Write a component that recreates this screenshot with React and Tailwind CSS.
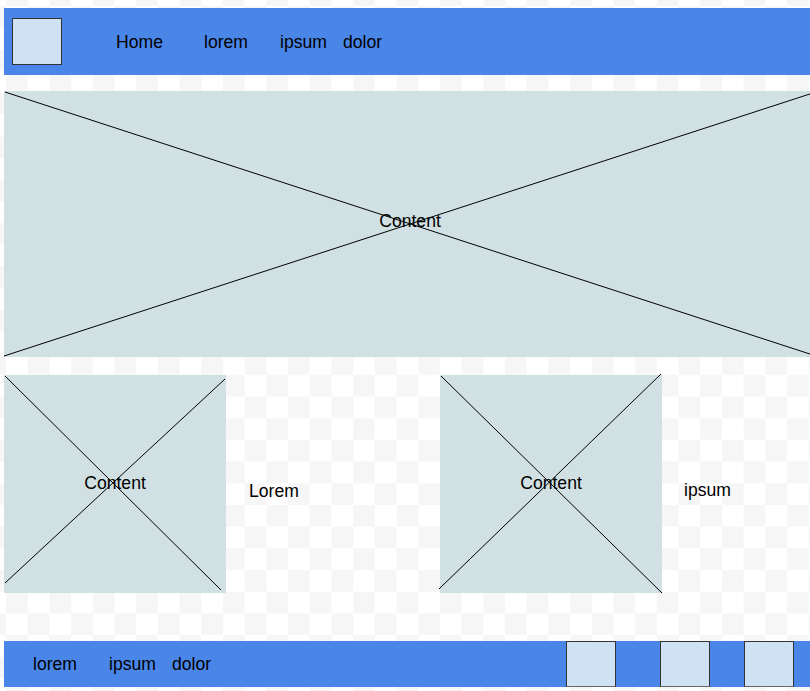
import React from "react";

const navItems = [
  { label: "Home", w: "w-[88px]" },
  { label: "lorem", w: "w-[76px]" },
  { label: "ipsum", w: "w-[63px]" },
  { label: "dolor", w: "w-[60px]" },
];

const footerItems = [
  { label: "lorem", w: "w-[76px]" },
  { label: "ipsum", w: "w-[63px]" },
  { label: "dolor", w: "w-[60px]" },
];

// placeholder box with a cross drawn over it
const Placeholder = ({ className, w, h, lines }) => (
  <div className={`relative bg-[#d0e0e3] flex items-center justify-center ${className}`}>
    <svg
      className="absolute inset-0 overflow-visible"
      width={w}
      height={h}
      viewBox={`0 0 ${w} ${h}`}
    >
      {lines.map((l, i) => (
        <line key={i} x1={l[0]} y1={l[1]} x2={l[2]} y2={l[3]} stroke="#000" strokeWidth="1" />
      ))}
    </svg>
    <span className="relative">Content</span>
  </div>
);

const App = () => {
  return (
    <div
      className="min-h-screen w-full overflow-hidden bg-[repeating-conic-gradient(#f6f6f6_0_25%,#ffffff_0_50%)] bg-[length:43.4px_43.4px] bg-[position:6px_6px] text-black text-[17.6px] leading-none"
      style={{ fontFamily: '"Liberation Sans", Arial, sans-serif' }}
    >
      <div className="w-[812px] ml-1 pt-2">
        {/* Header */}
        <div className="h-[67px] bg-[#4a86e8] flex items-center pl-2 pb-[1px]">
          <div className="w-[50px] h-[47px] bg-[#cfe2f3] border border-[#333]" />
          <nav className="flex items-center ml-[54px] pt-[4px]">
            {navItems.map((n) => (
              <span key={n.label} className={n.w}>
                {n.label}
              </span>
            ))}
          </nav>
        </div>

        {/* Hero */}
        <Placeholder
          className="mt-4 h-[266px] w-[812px] pb-1"
          w={812}
          h={266}
          lines={[
            [1, 1, 812, 265],
            [0, 265, 812, 1],
          ]}
        />

        {/* Row */}
        <div className="mt-[18px] flex items-center">
          <Placeholder
            className="w-[222px] h-[218px]"
            w={222}
            h={218}
            lines={[
              [1, 1, 217, 215],
              [221, 4, 1, 208],
            ]}
          />
          <div className="w-[214px] pl-[23px] pt-[16px]">Lorem</div>
          <Placeholder
            className="w-[222px] h-[218px]"
            w={222}
            h={218}
            lines={[
              [1, 1, 222, 218],
              [-1, 214, 221, -1],
            ]}
          />
          <div className="pl-[22px] pt-[14px]">ipsum</div>
        </div>

        {/* Footer */}
        <div className="mt-12 h-[46px] bg-[#4a86e8] flex items-center">
          <div className="flex items-center pl-[29px] pt-[2px]">
            {footerItems.map((n) => (
              <span key={n.label} className={n.w}>
                {n.label}
              </span>
            ))}
          </div>
          <div className="flex h-full ml-[334px]">
            <div className="w-[50px] h-full bg-[#cfe2f3] border border-[#333] border-b-[#666]" />
            <div className="w-[50px] h-full bg-[#cfe2f3] border border-[#333] border-b-[#666] ml-[44px]" />
            <div className="w-[50px] h-full bg-[#cfe2f3] border border-[#333] border-b-[#666] ml-[34px]" />
          </div>
        </div>
      </div>
    </div>
  );
};

export default App;
